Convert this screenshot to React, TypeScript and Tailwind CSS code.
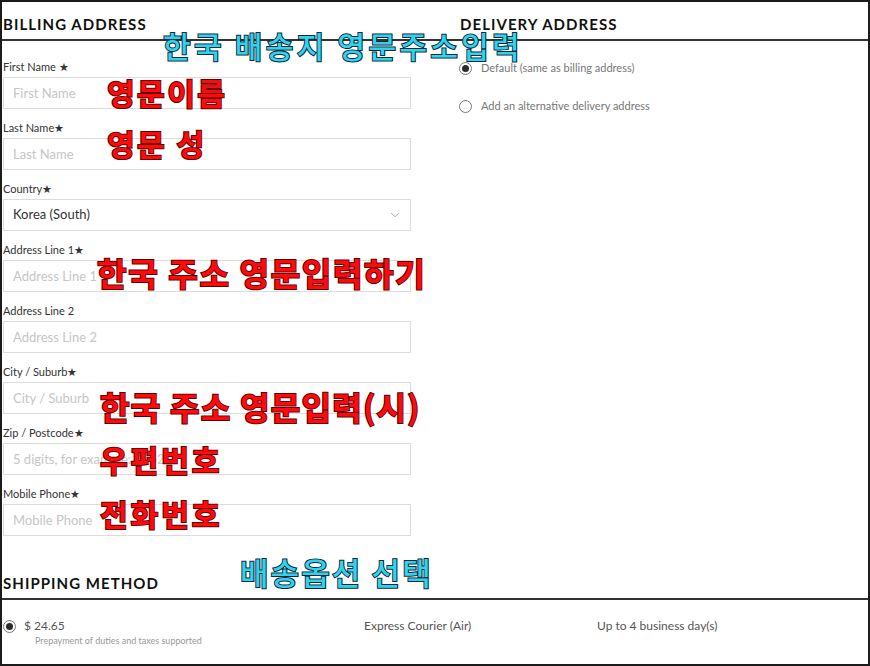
import React from 'react';
import { ChevronDown } from 'lucide-react';

const fields = [
  { label: 'First Name ★', placeholder: 'First Name' },
  { label: 'Last Name★', placeholder: 'Last Name' },
  { label: 'Country★', value: 'Korea (South)', select: true },
  { label: 'Address Line 1★', placeholder: 'Address Line 1' },
  { label: 'Address Line 2', placeholder: 'Address Line 2' },
  { label: 'City / Suburb★', placeholder: 'City / Suburb' },
  { label: 'Zip / Postcode★', placeholder: '5 digits, for example: 04524' },
  { label: 'Mobile Phone★', placeholder: 'Mobile Phone' },
];

function Radio({ checked }: { checked?: boolean }) {
  return (
    <span className="flex h-[13px] w-[13px] shrink-0 items-center justify-center rounded-full border border-[#7a7a7a] bg-white">
      {checked && <span className="h-[7px] w-[7px] rounded-full bg-[#2b2b2b]" />}
    </span>
  );
}

const red =
  'absolute whitespace-nowrap leading-none font-bold text-[#ff0a0a] [-webkit-text-stroke:2px_#5c0000] [paint-order:stroke_fill]';
const cyan =
  'absolute whitespace-nowrap leading-none font-medium text-[#2fd3ea] [-webkit-text-stroke:2px_#0b2740] [paint-order:stroke_fill]';

export default function App() {
  return (
    <div className="relative h-[666px] w-[870px] overflow-hidden border-2 border-[#1b1b1b] bg-white font-['Lato',_'Liberation_Sans',_sans-serif] text-[#333]">
      <div className="grid grid-cols-[455px_1fr]">
        {/* billing */}
        <div>
          <div className="flex h-[39px] items-end border-b-2 border-[#333] pb-[5px] pl-[1px]">
            <h2 className="text-[15px] font-bold uppercase leading-[20px] tracking-[0.07em] text-[#111]">
              Billing Address
            </h2>
          </div>
          <div className="flex flex-col gap-[10px] pt-[17px]">
            {fields.map((f) => (
              <div key={f.label} className="flex flex-col gap-[2px] pl-[1px]">
                <label className="h-[17px] text-[11px] leading-[17px] text-[#333]">{f.label}</label>
                {f.select ? (
                  <div className="flex h-[32px] w-[408px] items-center justify-between border border-[#dcdcdc] pl-[9px] pr-[8px] text-[13px] text-[#333]">
                    <span>{f.value}</span>
                    <ChevronDown size={14} strokeWidth={1.4} className="text-[#8a8a8a]" />
                  </div>
                ) : (
                  <input
                    placeholder={f.placeholder}
                    className="h-[32px] w-[408px] border border-[#dcdcdc] px-[9px] text-[13px] outline-none placeholder:text-[#c6c6c6]"
                  />
                )}
              </div>
            ))}
          </div>
        </div>

        {/* delivery */}
        <div>
          <div className="flex h-[39px] items-end border-b-2 border-[#333] pb-[5px] pl-[3px]">
            <h2 className="text-[15px] font-bold uppercase leading-[20px] tracking-[0.07em] text-[#111]">
              Delivery Address
            </h2>
          </div>
          <div className="flex flex-col gap-[22px] pl-[2px] pt-[19px] text-[11px] leading-[16px] text-[#777]">
            <div className="flex items-center gap-[9px]">
              <Radio checked />
              <span>Default (same as billing address)</span>
            </div>
            <div className="flex items-center gap-[9px]">
              <Radio />
              <span>Add an alternative delivery address</span>
            </div>
          </div>
        </div>
      </div>

      {/* shipping */}
      <div className="flex h-[64px] items-end border-b-2 border-[#333] pb-[5px] pl-[1px]">
        <h2 className="text-[15px] font-bold uppercase leading-[20px] tracking-[0.07em] text-[#111]">
          Shipping Method
        </h2>
      </div>
      <div className="flex pt-[19px] text-[12px] leading-[14px] text-[#555]">
        <div className="w-[362px]">
          <div className="flex items-center gap-[8px] pl-[1px]">
            <Radio checked />
            <span>$ 24.65</span>
          </div>
          <p className="mt-[2px] pl-[33px] text-[9px] leading-[12px] text-[#999]">
            Prepayment of duties and taxes supported
          </p>
        </div>
        <div className="w-[233px]">Express Courier (Air)</div>
        <div>Up to 4 business day(s)</div>
      </div>

      {/* annotations */}
      <div className="font-['Noto_Sans_CJK_KR',_sans-serif]">
        <span className={`${cyan} left-[161px] top-[28px] text-[30px] tracking-[3.3px]`}>한국 배송지 영문주소입력</span>
        <span className={`${red} left-[105px] top-[75px] text-[30px] tracking-[2.5px]`}>영문이름</span>
        <span className={`${red} left-[105px] top-[126px] text-[30px] tracking-[2.5px]`}>영문 성</span>
        <span className={`${red} left-[95px] top-[254px] text-[32px] tracking-[1.7px]`}>한국 주소 영문입력하기</span>
        <span className={`${red} left-[98px] top-[388px] text-[32px] tracking-[1.3px]`}>한국 주소 영문입력(시)</span>
        <span className={`${red} left-[98px] top-[442px] text-[30px] tracking-[3px]`}>우편번호</span>
        <span className={`${red} left-[98px] top-[496px] text-[30px] tracking-[3px]`}>전화번호</span>
        <span className={`${cyan} left-[238px] top-[554px] text-[31px] tracking-[2.1px]`}>배송옵션 선택</span>
      </div>
    </div>
  );
}
